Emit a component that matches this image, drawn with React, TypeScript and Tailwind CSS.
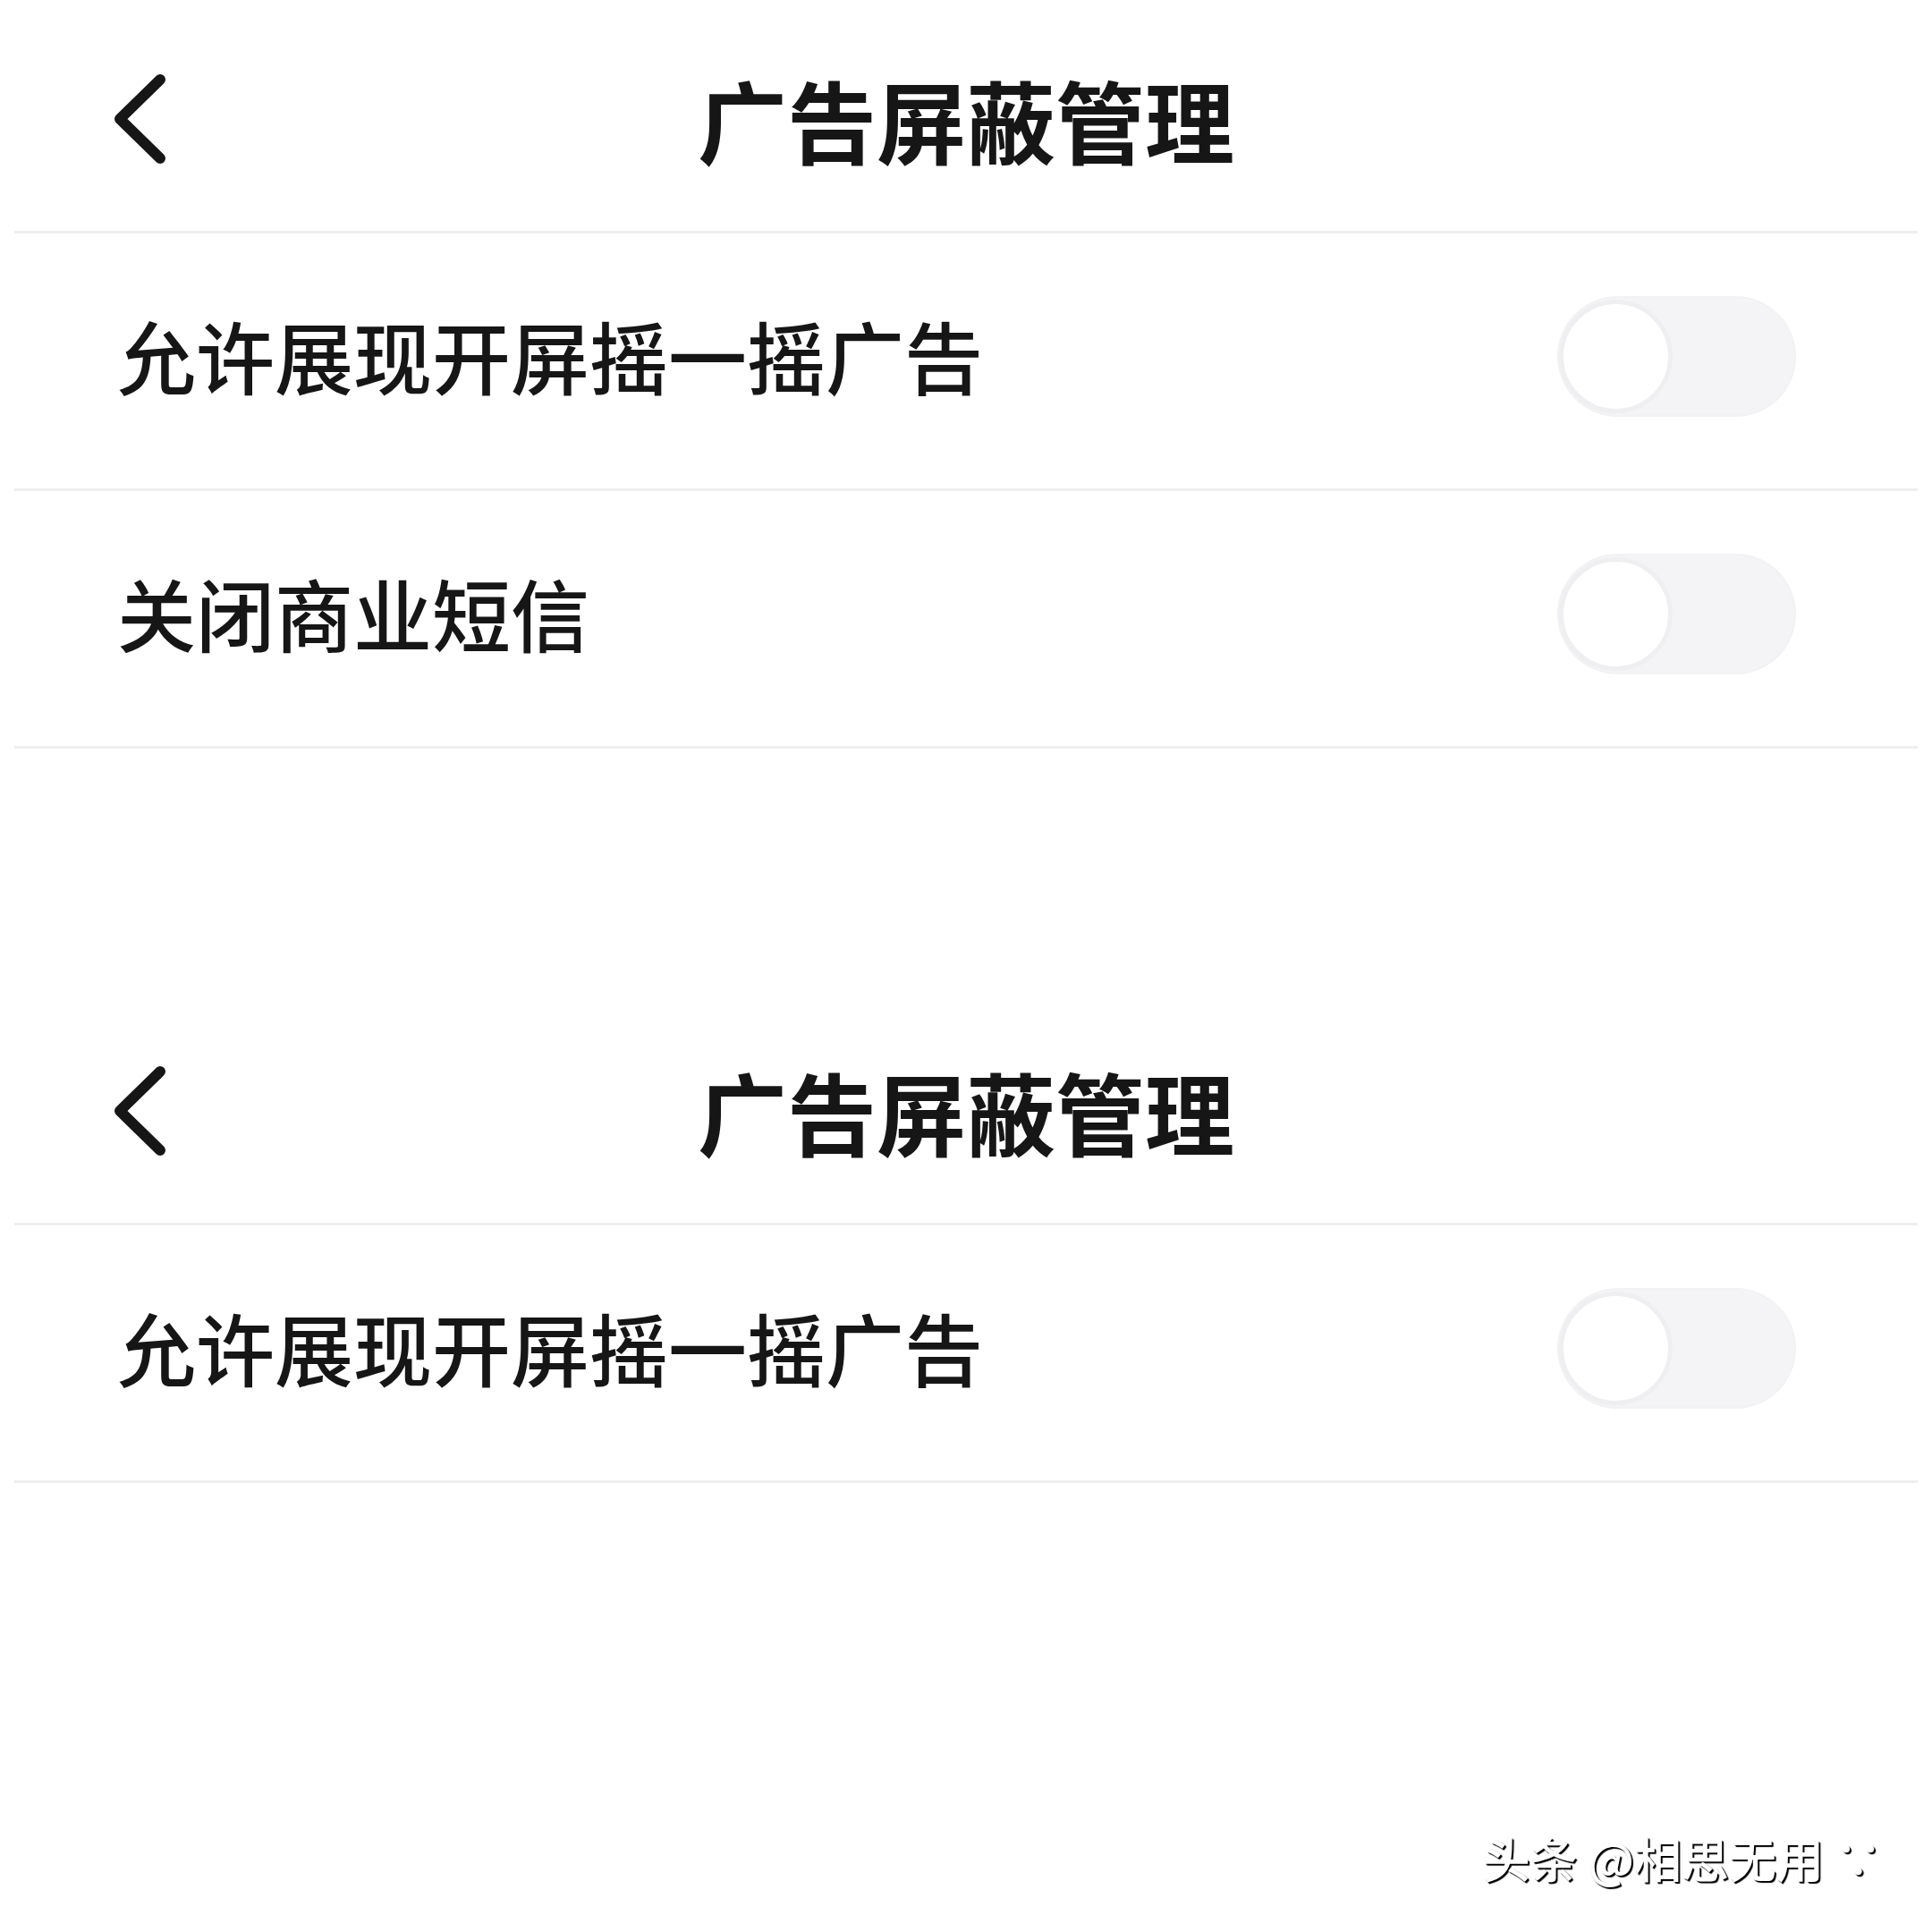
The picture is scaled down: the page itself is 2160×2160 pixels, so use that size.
import React from "react"

const FONT = "font-['Noto_Sans_CJK_SC','Noto_Sans',sans-serif]"

function BackIcon() {
  return (
    <svg width="64" height="104" viewBox="0 0 64 104" fill="none">
      <polyline
        points="54,8 9,52 54,96"
        stroke="#161616"
        strokeWidth="12"
        strokeLinecap="round"
        strokeLinejoin="round"
      />
    </svg>
  )
}

function Toggle() {
  return (
    <div className="flex h-[131px] w-[263px] items-center rounded-full bg-[#f4f4f7] shadow-[0_0_0_2px_#f2f2f4]">
      <div className="h-[127px] w-[127px] rounded-full border-[5px] border-[#efeff1] bg-white" />
    </div>
  )
}

function Divider() {
  return <div className="mx-[16px] h-[3px] bg-[#eeeeee]" />
}

function Header() {
  return (
    <div className="grid h-[258px] grid-cols-[1fr_auto_1fr] items-center pt-[8px]">
      <div className="pl-[125px]">
        <BackIcon />
      </div>
      <h1 className="text-[100px] font-bold leading-none text-[#161616]">广告屏蔽管理</h1>
      <div />
    </div>
  )
}

function Row({ label }: { label: string }) {
  return (
    <div className="flex h-[285px] items-center justify-between pb-[10px] pl-[131px] pr-[154px]">
      <span className="mb-[6px] text-[88px] font-medium leading-none text-[#161616]">{label}</span>
      <Toggle />
    </div>
  )
}

export default function App() {
  return (
    <div className={`${FONT} flex h-[2160px] w-[2160px] flex-col bg-white`}>
      <section>
        <Header />
        <Divider />
        <Row label="允许展现开屏摇一摇广告" />
        <Divider />
        <Row label="关闭商业短信" />
        <Divider />
      </section>

      <section className="mt-[272px]">
        <Header />
        <Divider />
        <Row label="允许展现开屏摇一摇广告" />
        <Divider />
      </section>

      <div className="mt-auto flex justify-end pb-[56px] pr-[56px]">
        <span className="text-[53px] font-medium leading-none text-white [text-shadow:2px_2px_1px_rgba(0,0,0,1),1px_1px_1px_rgba(0,0,0,0.9)]">
          头条 @相思无用 ∵
        </span>
      </div>
    </div>
  )
}
